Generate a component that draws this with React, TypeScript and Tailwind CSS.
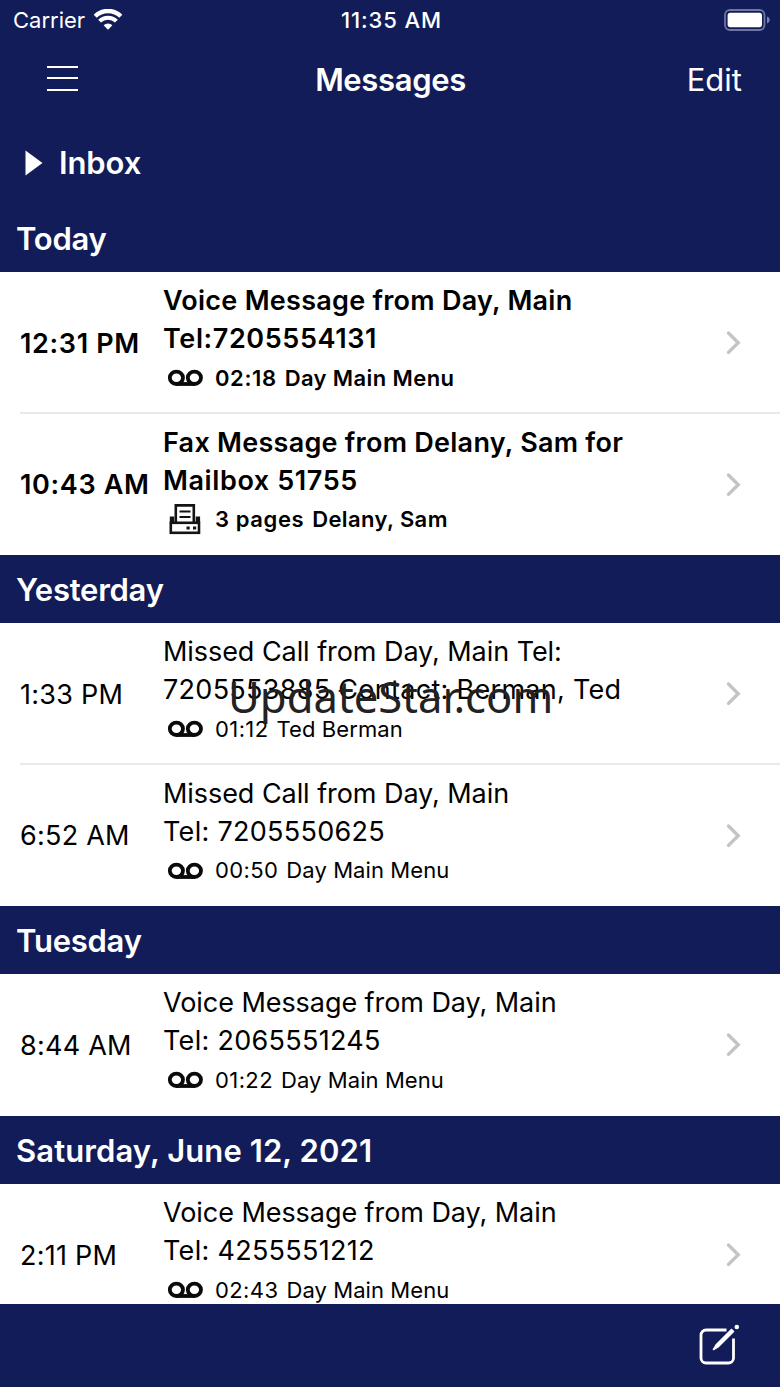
import React from "react";

interface Message {
  time: string;
  lines: string[];
  kind: "voice" | "fax";
  duration: string;
  from: string;
  unread?: boolean;
}

interface Section {
  title: string;
  messages: Message[];
}

const sections: Section[] = [
  {
    title: "Today",
    messages: [
      {
        time: "12:31 PM",
        lines: ["Voice Message from Day, Main", "Tel:7205554131"],
        kind: "voice",
        duration: "02:18",
        from: "Day Main Menu",
        unread: true,
      },
      {
        time: "10:43 AM",
        lines: ["Fax Message from Delany, Sam for", "Mailbox 51755"],
        kind: "fax",
        duration: "3 pages",
        from: "Delany, Sam",
        unread: true,
      },
    ],
  },
  {
    title: "Yesterday",
    messages: [
      {
        time: "1:33 PM",
        lines: ["Missed Call from Day, Main Tel:", "7205553885 Contact: Berman, Ted"],
        kind: "voice",
        duration: "01:12",
        from: "Ted Berman",
      },
      {
        time: "6:52 AM",
        lines: ["Missed Call from Day, Main", "Tel: 7205550625"],
        kind: "voice",
        duration: "00:50",
        from: "Day Main Menu",
      },
    ],
  },
  {
    title: "Tuesday",
    messages: [
      {
        time: "8:44 AM",
        lines: ["Voice Message from Day, Main", "Tel: 2065551245"],
        kind: "voice",
        duration: "01:22",
        from: "Day Main Menu",
      },
    ],
  },
  {
    title: "Saturday, June 12, 2021",
    messages: [
      {
        time: "2:11 PM",
        lines: ["Voice Message from Day, Main", "Tel: 4255551212"],
        kind: "voice",
        duration: "02:43",
        from: "Day Main Menu",
      },
    ],
  },
];

function WifiIcon() {
  return (
    <svg width="30" height="22" viewBox="0 0 30 22" fill="none">
      <path d="M2.2 7.2a18.2 18.2 0 0 1 25.6 0" stroke="white" strokeWidth="4.4" />
      <path d="M6.6 12.2a11.9 11.9 0 0 1 16.8 0" stroke="white" strokeWidth="4" />
      <path d="M15 20.8l-4.4-4.500a6.200 6.200 0 0 1 8.800 0z" fill="white" />
    </svg>
  );
}

function BatteryIcon() {
  return (
    <svg width="46" height="22" viewBox="0 0 46 22" fill="none">
      <rect x="1" y="1" width="39.5" height="20" rx="5" stroke="#6f76a0" strokeWidth="1.8" />
      <rect x="3.6" y="3.8" width="34.4" height="14.4" rx="2.6" fill="white" />
      <path d="M43 7.600c1.600.6 2.700 1.800 2.700 3.400s-1.100 2.800-2.700 3.400z" fill="#7d83a8" />
    </svg>
  );
}

function VoicemailIcon() {
  return (
    <svg width="36" height="18" viewBox="0 0 36 18" fill="none" stroke="#0a0a0a" strokeWidth="3.8">
      <ellipse cx="9.4" cy="8.8" rx="6.6" ry="6.200" />
      <ellipse cx="27.4" cy="8.8" rx="6.6" ry="6.200" />
      <path d="M9.4 15H27.400" />
    </svg>
  );
}

function FaxIcon() {
  return (
    <svg width="32" height="31" viewBox="0 0 32 31" fill="none" stroke="#141414">
      <path d="M6.8 18V1.400H24.800V18" strokeWidth="2.6" />
      <path d="M10.500 7.500H21.500M10.500 13H21.500" strokeWidth="2.200" />
      <path d="M3 12.500V19M28.900 12.500V19" strokeWidth="4.400" />
      <rect x="1.800" y="18.800" width="28.200" height="10" strokeWidth="2.600" />
      <path d="M17.500 24h3.200M24 24h3.200" strokeWidth="3.200" />
    </svg>
  );
}

function MessageRow({ message, divider, short }: { message: Message; divider: boolean; short: boolean }) {
  const { unread } = message;

  // lines that carry a number are set a little wider
  const lineTracking = (line: string) => {
    const numeric = /\d{5}/.test(line);
    if (unread) return numeric ? "tracking-[0.6px]" : "tracking-[0.26px]";
    return numeric ? "tracking-[0.29px]" : "tracking-[-0.06px]";
  };

  return (
    <div
      className={`flex pl-5 ${short ? "h-[141px]" : "h-[142px]"} ${
        unread ? "font-[570]" : "font-normal"
      }`}
    >
      <div className={`flex flex-1 ${divider ? "border-b-2 border-[#e9e9e9]" : ""}`}>
        <div
          className={`flex w-[143px] items-center whitespace-nowrap text-[27px] ${
            short ? "h-[143px]" : "h-[144px]"
          } ${unread ? "tracking-[0.65px]" : "tracking-[0.25px]"}`}
        >
          {message.time}
        </div>
        <div className="flex-1 whitespace-nowrap pt-[10px]">
          {message.lines.map((line) => (
            <p key={line} className={`text-[27px] leading-[37.5px] ${lineTracking(line)}`}>
              {line}
            </p>
          ))}
          <div className={`flex items-center text-[22px] ${short ? "h-[41px]" : "h-[42px]"}`}>
            <div className="flex w-[52px] shrink-0 pl-1">
              {message.kind === "voice" ? (
                <VoicemailIcon />
              ) : (
                <div className="pl-0.5">
                  <FaxIcon />
                </div>
              )}
            </div>
            <span className={unread ? "tracking-[0.6px]" : "tracking-[0.4px]"}>
              {message.duration}
            </span>
            <span className={`ml-2 ${unread ? "tracking-[0.4px]" : "tracking-[0.08px]"}`}>
              {message.from}
            </span>
          </div>
        </div>
        <div className="flex h-[141px] w-[57px] items-center">
          <svg width="20" height="26" viewBox="0 0 20 26" fill="none">
            <path d="M5.500 3l9.700 9.700L5.500 22.400" stroke="#c4c4c6" strokeWidth="3.400" strokeLinecap="round" />
          </svg>
        </div>
      </div>
    </div>
  );
}

export default function App() {
  return (
    <div className="relative flex h-[1387px] w-[780px] flex-col overflow-hidden bg-white font-['Inter',sans-serif] text-black">
      <header className="h-[204px] shrink-0 bg-[#121c58] text-white">
        {/* Status bar */}
        <div className="grid h-10 grid-cols-3 items-center pl-[13px] pr-[10px] text-[22px]">
          <div className="flex items-center gap-2">
            <span>Carrier</span>
            <WifiIcon />
          </div>
          <span className="text-center font-medium tracking-[0.9px]">11:35 AM</span>
          <div className="flex justify-end pb-px">
            <BatteryIcon />
          </div>
        </div>

        {/* Navigation bar */}
        <div className="grid h-20 grid-cols-3 items-center pl-[47px] pr-[38px] text-[31px]">
          <div className="flex w-[31px] flex-col gap-[9.5px] pb-[4px]">
            <div className="h-0.5 bg-white" />
            <div className="h-0.5 bg-white" />
            <div className="h-0.5 bg-white" />
          </div>
          <h1 className="-ml-2 text-center font-[570] tracking-[-0.35px]">Messages</h1>
          <button className="text-right">Edit</button>
        </div>

        <div className="flex h-[86px] items-center gap-4 pl-[25px] text-[31px] font-[570] tracking-[-0.1px]">
          <svg width="18" height="26" viewBox="0 0 18 26">
            <path d="M.5 0.5L17.5 13L.5 25.5z" fill="white" />
          </svg>
          <span>Inbox</span>
        </div>
      </header>

      <main className="h-[1100px] shrink-0 overflow-hidden">
        {sections.map((section) => (
          <section key={section.title}>
            <h2
              className={`flex h-[68px] items-center bg-[#121c58] pl-4 pt-0.5 text-[31px] font-[570] text-white ${
                section.title.length > 10 ? "tracking-[0.1px]" : "tracking-[-0.25px]"
              }`}
            >
              {section.title}
            </h2>
            {section.messages.map((message, i) => (
              <MessageRow
                key={message.time}
                message={message}
                divider={i < section.messages.length - 1}
                short={i > 0}
              />
            ))}
          </section>
        ))}
      </main>

      <footer className="flex h-[83px] shrink-0 items-center justify-end bg-[#121c58] pb-0.5 pr-10">
        <svg width="42" height="42" viewBox="0 0 42 42" fill="none" stroke="white">
          <path
            d="M28.5 6H8a5 5 0 0 0-5 5v23a5 5 0 0 0 5 5h22.5a5 5 0 0 0 5-5V14.500"
            strokeWidth="2.800"
          />
          <path d="M15.500 25.500L18.500 20.500L33.500 5.500L35.500 7.500L20.500 22.500z" strokeWidth="1.600" strokeLinejoin="round" fill="white" />
          <circle cx="38.800" cy="3" r="2.300" fill="white" stroke="none" />
        </svg>
      </footer>

      <div className="absolute left-[228px] top-[666px] whitespace-nowrap font-['Noto_Sans',sans-serif] text-[43.6px] leading-[60px] text-[#222222]">
        UpdateStar.com
      </div>
    </div>
  );
}
